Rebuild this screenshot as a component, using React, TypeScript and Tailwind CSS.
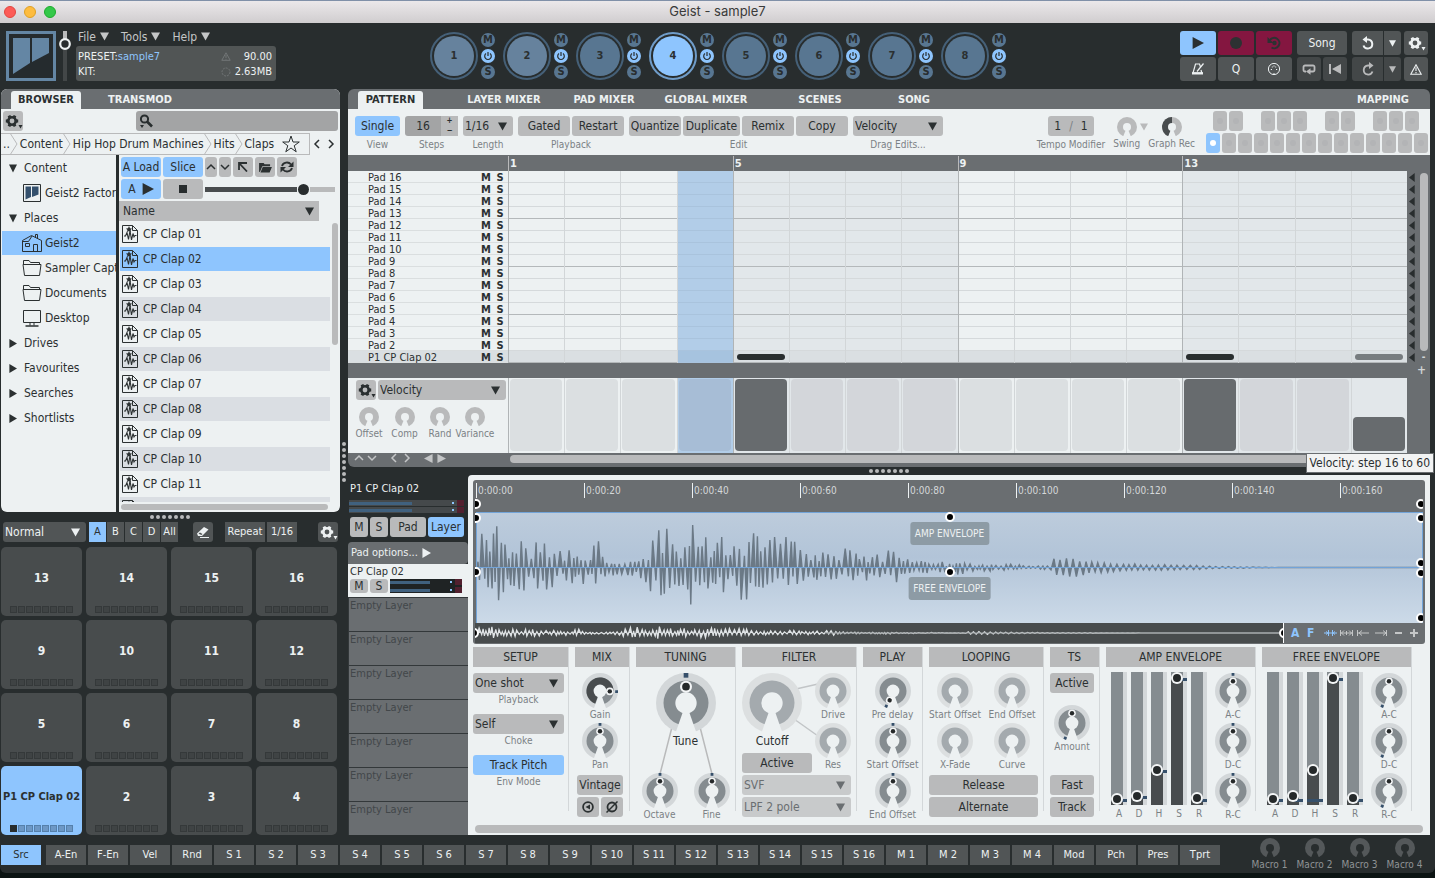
import React from 'react';
import clsx from 'clsx';

const KITS = [1, 2, 3, 4, 5, 6, 7, 8];
const STEPS = Array.from({ length: 16 }, (_, i) => i);
const PADS = [13, 14, 15, 16, 9, 10, 11, 12, 5, 6, 7, 8, 1, 2, 3, 4];
const CLAPS = ['01', '02', '03', '04', '05', '06', '07', '08', '09', '10', '11', '12'];
const SOURCES = [
  'A-En', 'F-En', 'Vel', 'Rnd',
  ...STEPS.map((i) => `S ${i + 1}`),
  'M 1', 'M 2', 'M 3', 'M 4', 'Mod', 'Pch', 'Pres', 'Tprt',
];

/* ---------- icons ---------- */

const Tri = ({ dir = 'down', className = 'w-[9px] h-[9px]' }: { dir?: 'down' | 'right' | 'left'; className?: string }) => {
  const d = { down: 'M0 0.5H10L5 9.5Z', right: 'M0.5 0L10 5L0.5 10Z', left: 'M9.5 0L0 5L9.5 10Z' }[dir];
  return (
    <svg viewBox="0 0 10 10" className={clsx('shrink-0', className)} fill="currentColor" preserveAspectRatio="none">
      <path d={d} />
    </svg>
  );
};

const Gear = () => (
  <svg viewBox="0 0 20 20" className="w-5 h-5 shrink-0" fill="none" stroke="currentColor">
    <circle cx="9" cy="10" r="3.7" strokeWidth="2.6" />
    {[0, 60, 120, 180, 240, 300].map((a) => (
      <path key={a} d="M7.2 6.2L7.6 3.8H10.4L10.8 6.2Z" fill="currentColor" stroke="none" transform={`rotate(${a + 30} 9 10)`} />
    ))}
    <path d="M15.5 14H19.5L17.5 17.5Z" fill="currentColor" stroke="none" />
  </svg>
);

const Caret = ({ d }: { d: string }) => (
  <svg viewBox="0 0 10 10" className="w-[10px] h-[10px] shrink-0" fill="none" stroke="currentColor" strokeWidth="1.5">
    <path d={d} />
  </svg>
);
const UP = 'M1 7L5 3L9 7';
const DOWN = 'M1 3L5 7L9 3';
const LEFT = 'M7 1L3 5L7 9';
const RIGHT = 'M3 1L7 5L3 9';

const FileIcon = () => (
  <svg viewBox="0 0 16 18" className="w-4 h-[18px] shrink-0" fill="none" stroke="currentColor" strokeWidth="1">
    <path d="M0.5 0.5H10.5L15.5 5.5V17.5H0.5Z" />
    <path d="M10.5 0.5V5.5H15.5" />
    <path d="M2 11H3.5L5 7.5L6.5 14.5L8 5.5L9.5 15L11 8.5L12 12L13 10.5H14.5" strokeWidth="1.1" />
    <path d="M7 1L8 3.2L10 3.4L8.6 5L9 7L7 6L5 7L5.4 5L4 3.4L6 3.2Z" fill="currentColor" stroke="none" />
  </svg>
);

const TreeIcon = ({ kind }: { kind: string }) => (
  <svg viewBox="0 0 20 18" className="w-5 h-[18px] shrink-0" fill="none" stroke="currentColor" strokeWidth="1">
    {kind === 'factory' && (
      <>
        <path d="M1.5 0.5H18.5V17.5H1.5Z" fill="#edf1f2" />
        <path d="M3.5 2.5H9V13L3.5 15.5ZM10 2.5H16.5V10.5L10 13Z" fill="#34506d" stroke="none" />
      </>
    )}
    {kind === 'home' && (
      <>
        <path d="M0.5 17.5V6.5L9.5 1.5L19.5 6.5M0.5 7.5H6.5L10 2M13.5 3.5V0.5H15.5V4.5M19.5 6.5V17.5H0.5" />
        <path d="M3.5 9.5H7.5V12.5H3.5ZM11.5 17V10.5H15.5V17" />
      </>
    )}
    {kind === 'folder' && (
      <>
        <path d="M1.5 5V1.5H7L8.5 3.5H17.5V5M1 5.5H19L17.5 16.5H2.5Z" />
      </>
    )}
    {kind === 'desktop' && (
      <>
        <path d="M1.5 1.5H18.5V13.5H1.5ZM8 13.5V16.5M12 13.5V16.5" />
        <path d="M3.5 17H16.5" strokeWidth="1.6" />
      </>
    )}
  </svg>
);

const Power = () => (
  <svg viewBox="0 0 14 14" className="w-[14px] h-[14px]" fill="none" stroke="#282d2e" strokeWidth="1.2">
    <path d="M5 4.6A3.3 3.3 0 1 0 9 4.6M7 3V7" />
  </svg>
);

const Dots = ({ vertical = false }: { vertical?: boolean }) => (
  <div className={clsx('flex gap-0.5', vertical && 'flex-col')}>
    {[0, 1, 2, 3, 4, 5, 6].map((i) => (
      <span key={i} className="w-1 h-1 rounded-full bg-[#b9babb]" />
    ))}
  </div>
);

/* ---------- controls ---------- */

interface KnobProps {
  label: string;
  size?: 20 | 36 | 60;
  tone?: 'mini' | 'dark' | 'normal' | 'dim';
  angle?: number; // pointer, degrees clockwise from noon
  mark?: number; // modulation mark
  fill?: boolean;
}

const TONES = {
  mini: ['none', '#b9babb', '#edf1f2'],
  dark: ['none', '#54585a', '#282d2e'],
  normal: ['#d3d7d9', '#858c90', '#edf1f2'],
  dim: ['#dcdfe0', '#a4aaae', '#edf1f2'],
};

const Knob: React.FC<KnobProps> = ({ label, size = 36, tone = 'normal', angle, mark, fill }) => {
  const [outer, ring, bg] = TONES[tone];
  const small = size === 20;
  const r = small ? 20 : 13.5;
  return (
    <label className="relative flex flex-col items-center whitespace-nowrap">
      <input type="range" className="sr-only" aria-label={label} />
      <svg
        viewBox={small ? '-20 -20 40 40' : '-18 -18 36 36'}
        className={clsx('shrink-0', size === 20 && 'w-5 h-5', size === 36 && 'w-9 h-9', size === 60 && 'w-[60px] h-[60px]')}
      >
        <circle r="18" fill={outer} />
        <circle r={r} fill={ring} />
        {fill && !small && <path d="M0 0L-4.9 12.6A13.5 13.5 0 1 1 13.5 0Z" fill="#484c4e" />}
        {fill && small && <path d="M0 0L-7 18.7A20 20 0 0 1 0 -20Z" fill="#484c4e" />}
        <path d={small ? 'M0 0L-9 22H9Z' : 'M0 0L-7 20H7Z'} fill={bg} />
        <circle r={small ? 8 : 6.4} fill={bg} />
        {mark !== undefined && <rect x="-1.4" y="-18" width="2.8" height="2.8" fill="#36506b" transform={`rotate(${mark})`} />}
        {angle !== undefined && (
          <g transform={`rotate(${angle})`}>
            <circle cy="-9.8" r={size === 60 ? 3.6 : 3.8} fill="#f4f6f7" />
            <circle cy="-9.8" r={size === 60 ? 2.3 : 2.2} fill="#25292a" />
          </g>
        )}
      </svg>
      {size === 60 ? (
        <span className="text-xs leading-4 text-[#2b3031]">{label}</span>
      ) : (
        <span
          className={clsx(
            'text-[10px]',
            small ? 'leading-[14px]' : 'leading-3 mb-0.5',
            tone === 'dark' ? 'text-[#8f9395]' : 'text-[#7b8185]'
          )}
        >
          {label}
        </span>
      )}
    </label>
  );
};

const Btn = ({ children, className, label }: { children: React.ReactNode; className?: string; label?: string }) => (
  <button
    aria-label={label}
    className={clsx('h-5 shrink-0 rounded-[3px] flex items-center justify-center text-xs leading-4 whitespace-nowrap', className)}
  >
    {children}
  </button>
);

const GREY = 'bg-[#b9babb] text-[#2b3031]';
const BLUE = 'bg-[#8ec5fe] text-[#2b3031]';
const SLATE = 'bg-[#515556] text-[#edf1f2]';

const Drop = ({ value, label, className }: { value: string; label: string; className?: string }) => (
  <div className={clsx('relative h-5 shrink-0 rounded-[3px] flex items-center', className)}>
    <select aria-label={label} className="appearance-none w-full h-5 bg-transparent pl-0.5 text-xs leading-4 outline-none">
      <option>{value}</option>
    </select>
    <Tri className="w-[9px] h-[9px] absolute right-[6px] pointer-events-none" />
  </div>
);

const Caption = ({ children }: { children: React.ReactNode }) => (
  <span className="text-[10px] leading-[14px] text-[#7b8185] text-center whitespace-nowrap">{children}</span>
);

/* ---------- title + header ---------- */

const TitleBar = () => (
  <div className="relative h-[23px] bg-linear-to-b from-[#ebe8ea] to-[#d0cdcf] border-t border-[#8090a8] flex items-center justify-center">
    <div className="absolute left-1 flex gap-2">
      <span className="w-3 h-3 rounded-full bg-[#fc5b57] border border-[#e2463f]" />
      <span className="w-3 h-3 rounded-full bg-[#fdbc40] border border-[#dfa023]" />
      <span className="w-3 h-3 rounded-full bg-[#34c84a] border border-[#1dab2c]" />
    </div>
    <span className="font-['Inter',sans-serif] text-[13px] text-[#3a3a3a]">Geist - sample7</span>
  </div>
);

const Transport = () => {
  const b = 'h-6 rounded-[3px] flex items-center justify-center';
  return (
    <div className="flex gap-[5px] text-[#edf1f2] text-xs">
      <div className="grid grid-cols-[36px_36px_36px] gap-0.5">
        <button aria-label="Play" className={clsx(b, 'bg-[#8ec5fe] text-[#2b3031]')}><Tri dir="right" className="w-3 h-3" /></button>
        <button aria-label="Record" className={clsx(b, 'bg-[#841640]')}><span className="w-3 h-3 rounded-full bg-[#2d3132]" /></button>
        <button aria-label="Loop record" className={clsx(b, 'bg-[#841640]')}>
          <svg viewBox="0 0 16 14" className="w-4 h-[14px]" fill="none" stroke="#2d3132" strokeWidth="2">
            <path d="M4 4A5.2 5.2 0 1 1 5.5 11.5" />
            <circle cx="8.5" cy="7" r="2.2" fill="#2d3132" stroke="none" />
            <path d="M1.500 1V7H7.500Z" fill="#2d3132" stroke="none" />
          </svg>
        </button>
        <button aria-label="Metronome" className={clsx(b, 'bg-[#515556]')}>
          <svg viewBox="0 0 14 12" className="w-[14px] h-3" fill="none" stroke="currentColor">
            <path d="M2 10L4.5 1H8.5L9.5 4M10 7L10.8 10M6 8.5L12.5 0.5" strokeWidth="1.2" />
            <path d="M1 10.3H12" strokeWidth="2.4" />
          </svg>
        </button>
        <button className={clsx(b, 'bg-[#515556]')}>Q</button>
        <button aria-label="MIDI" className={clsx(b, 'bg-[#515556]')}>
          <svg viewBox="0 0 14 14" className="w-[14px] h-[14px]" fill="none" stroke="currentColor">
            <circle cx="7" cy="7" r="5.6" />
            <path d="M3.8 7.5H5M9 7.5H10.2M4.8 5H5.8M8.2 5H9.2M6.4 4H7.6M6 12H8" />
          </svg>
        </button>
      </div>
      <div className="grid grid-cols-[24px_24px] gap-0.5">
        <button className={clsx(b, 'bg-[#515556] col-span-2')}>Song</button>
        <button aria-label="Loop" className={clsx(b, 'bg-[#434748] text-[#b9babb]')}>
          <svg viewBox="0 0 14 12" className="w-[14px] h-3" fill="none" stroke="currentColor" strokeWidth="1.8">
            <path d="M4 8.5H3A1.5 1.5 0 0 1 1.5 7V4A1.5 1.5 0 0 1 3 2.5H11A1.5 1.5 0 0 1 12.5 4V7A1.5 1.5 0 0 1 11 8.5H8" />
            <path d="M8.5 5.2V11.8L4 8.5Z" fill="currentColor" stroke="none" />
          </svg>
        </button>
        <button aria-label="Rewind" className={clsx(b, 'bg-[#434748] text-[#b9babb]')}>
          <svg viewBox="0 0 12 10" className="w-3 h-[10px]" fill="currentColor"><path d="M0 0H2V10H0ZM12 0V10L3 5Z" /></svg>
        </button>
      </div>
      <div className="grid grid-cols-[31px_17px] gap-x-px gap-y-0.5">
        <button aria-label="Undo" className={clsx(b, 'bg-[#515556] rounded-r-none')}>
          <svg viewBox="0 0 14 14" className="w-[14px] h-[14px]" fill="none" stroke="currentColor" strokeWidth="2">
            <path d="M4.5 3.5H7A4.5 4.5 0 1 1 2.5 9.5" />
            <path d="M6 0V7L1.5 3.5Z" fill="currentColor" stroke="none" />
          </svg>
        </button>
        <button aria-label="Undo history" className={clsx(b, 'bg-[#515556] rounded-l-none')}><Tri className="w-[7px] h-[7px]" /></button>
        <button aria-label="Redo" className={clsx(b, 'bg-[#434748] text-[#b9babb] rounded-r-none')}>
          <svg viewBox="0 0 14 14" className="w-[14px] h-[14px]" fill="none" stroke="currentColor" strokeWidth="1.8">
            <path d="M9.5 3.5H7A4.5 4.5 0 1 0 11.5 9.5" />
            <path d="M8 0V7L12.5 3.5Z" fill="currentColor" stroke="none" />
          </svg>
        </button>
        <button aria-label="Redo history" className={clsx(b, 'bg-[#434748] text-[#b9babb] rounded-l-none')}><Tri className="w-[7px] h-[7px]" /></button>
      </div>
      <div className="grid grid-cols-[24px] gap-0.5 -ml-[2px]">
        <button aria-label="Settings" className={clsx(b, 'bg-[#515556]')}><Gear /></button>
        <button aria-label="Warnings" className={clsx(b, 'bg-[#515556]')}>
          <svg viewBox="0 0 12 11" className="w-3 h-[11px]" fill="none" stroke="currentColor"><path d="M6 0.8L11.2 10.3H0.8ZM6 3.5V7M6 8V9.3" strokeWidth="1.1" /></svg>
        </button>
      </div>
    </div>
  );
};

const Header = () => (
  <header className="h-[66px] flex items-start justify-between pl-1.5 pr-[7px] pt-2">
    <div className="flex w-[340px]">
      <svg viewBox="0 0 50 50" className="w-[50px] h-[50px] shrink-0">
        <rect x="1.5" y="1.5" width="47" height="47" fill="#252b2e" stroke="#6486a4" strokeWidth="3" />
        <path d="M7 7H24V32L7 43Z" fill="#6486a4" />
        <path d="M26 7H43V22L26 31Z" fill="#6486a4" />
      </svg>
      <label className="relative ml-[3px]">
        <input type="range" className="sr-only" aria-label="Master volume" />
        <svg viewBox="0 0 12 50" className="w-3 h-[50px]">
          <path d="M4 0H8V8H4Z" fill="#b9babb" />
          <path d="M4 18H8V50H4Z" fill="#434748" />
          <circle cx="6" cy="13" r="4.8" fill="#282d2e" stroke="#edf1f2" strokeWidth="2.2" />
        </svg>
      </label>
      <div className="ml-[5px]">
        <div className="flex gap-3 h-[15px] pl-0.5 text-xs leading-3 text-[#c4c6c7]">
          {['File', 'Tools', 'Help'].map((m) => (
            <button key={m} className="flex items-start gap-1">{m}<Tri className="w-[9px] h-[9px] mt-px" /></button>
          ))}
        </div>
        <div className="w-[200px] h-[35px] rounded-[3px] bg-[#515555] px-0.5 pt-[3px] pr-1 text-[11px] leading-[15px] text-[#edf1f2] flex justify-between">
          <div>
            <div>PRESET:<span className="text-[#8ec5fe]">sample7</span></div>
            <div>KIT:</div>
          </div>
          <div className="text-right">
            <div className="flex items-center justify-between gap-1">
              <svg viewBox="0 0 10 9" className="w-[10px] h-[9px]" fill="none" stroke="#727677"><path d="M5 0.8L9.2 8.3H0.8ZM5 3V6M5 6.8V7.6" /></svg>
              90.00
            </div>
            <div className="flex items-center gap-1">
              <svg viewBox="0 0 10 10" className="w-[10px] h-[10px]" fill="none" stroke="#727677"><circle cx="5" cy="5" r="4" strokeDasharray="2 1" /></svg>
              2.63MB
            </div>
          </div>
        </div>
      </div>
    </div>
    <div className="flex gap-2.5">
      {KITS.map((k) => (
        <div key={k} className="flex items-center gap-[3px] w-[63px] pt-px">
          <button
            className={clsx(
              'w-12 h-12 shrink-0 rounded-full border-2 p-0.5',
              k === 4 ? 'border-[#6f9cc9]' : 'border-[#456078]'
            )}
          >
            <span
              className={clsx(
                'w-full h-full rounded-full flex items-center justify-center text-[11px] font-bold text-[#2b3031]',
                k === 4 ? 'bg-[#8ec5fe]' : k < 3 ? 'bg-[#66829d]' : 'bg-[#587691]'
              )}
            >
              {k}
            </span>
          </button>
          <div className="flex flex-col gap-0.5 text-[11px] leading-[14px] font-bold text-[#282d2e]">
            <button className="w-[14px] h-[14px] rounded-full bg-[#587691]">M</button>
            <button aria-label="Power" className="w-[14px] h-[14px] rounded-full bg-[#8ec5fe]"><Power /></button>
            <button className="w-[14px] h-[14px] rounded-full bg-[#587691]">S</button>
          </div>
        </div>
      ))}
    </div>
    <div className="w-[340px] flex justify-end"><Transport /></div>
  </header>
);

/* ---------- browser ---------- */

const TREE = [
  { name: 'Content', open: true },
  { name: 'Geist2 Factory', icon: 'factory' },
  { name: 'Places', open: true },
  { name: 'Geist2', icon: 'home', active: true },
  { name: 'Sampler Captures', icon: 'folder' },
  { name: 'Documents', icon: 'folder' },
  { name: 'Desktop', icon: 'desktop' },
  { name: 'Drives' },
  { name: 'Favourites' },
  { name: 'Searches' },
  { name: 'Shortlists' },
];

const Chevron = () => (
  <svg viewBox="0 0 8 22" className="w-2 h-[22px] shrink-0 mr-0.5" fill="none" stroke="#b9babb"><path d="M0 0L7 11L0 22" /></svg>
);

const Browser = () => (
  <section className="ml-px h-[423px] bg-[#edf1f2] rounded-md overflow-hidden flex flex-col text-xs text-[#2b3031]">
    <div className="h-5 shrink-0 bg-[#6a6e71] pt-0.5 pl-2.5 flex text-[11px] font-bold text-[#edf1f2]">
      <button className="w-[70px] bg-[#edf1f2] text-[#2b3031] rounded-t-[3px]">BROWSER</button>
      <button className="w-[118px]">TRANSMOD</button>
    </div>
    <div className="flex justify-between pl-0.5 pr-0.5 pt-0.5">
      <Btn label="Browser options" className={clsx('w-5', GREY)}><Gear /></Btn>
      <div className="w-[202px] h-5 rounded-[3px] bg-[#a3a4a5] flex items-center pl-[3px]">
        <svg viewBox="0 0 14 16" className="w-[14px] h-4 shrink-0" fill="none" stroke="#282d2e">
          <circle cx="5.5" cy="6" r="3.6" strokeWidth="2" /><path d="M8 8.5L13 13.5" strokeWidth="2.6" /><path d="M1 12H5L3 15Z" fill="#282d2e" stroke="none" />
        </svg>
        <input type="text" aria-label="Search" className="flex-1 bg-transparent outline-none" />
      </div>
    </div>
    <div className="flex items-center mt-0.5 h-[22px] shrink-0">
      <div className="w-[309px] h-[22px] border border-l-0 border-[#b9babb] flex items-center pl-0.5 whitespace-nowrap">
        <span>..</span><Chevron />
        <a href="#content">Content</a><Chevron />
        <a href="#machines">Hip Hop Drum Machines</a><Chevron />
        <a href="#hits">Hits</a><Chevron />
        <a href="#claps">Claps</a>
        <svg viewBox="0 0 18 18" className="w-[18px] h-[18px] shrink-0 ml-2" fill="none" stroke="#2b3031"><path d="M9 1L11 7H17.3L12.2 10.7L14.2 16.8L9 13L3.8 16.8L5.8 10.7L0.7 7H7Z" /></svg>
      </div>
      <button aria-label="Back" className="ml-0.5"><Caret d={LEFT} /></button>
      <button aria-label="Forward" className="ml-1"><Caret d={RIGHT} /></button>
    </div>
    <div className="flex flex-1 min-h-0">
      <ul className="w-[115px] shrink-0 overflow-hidden pt-px">
        {TREE.map((t) => (
          <li key={t.name} className="h-[25px]">
            <button className={clsx('h-6 w-full flex items-center whitespace-nowrap ml-px', t.active && 'bg-[#8ec5fe]', t.icon ? 'pl-5 gap-[3px]' : 'pl-[7px] gap-[7px]')}>
              {t.icon ? <TreeIcon kind={t.icon} /> : <Tri dir={t.open ? 'down' : 'right'} className="w-2 h-[9px]" />}
              {t.name}
            </button>
          </li>
        ))}
      </ul>
      <div className="w-[3px] shrink-0 bg-[#282d2e]" />
      <div className="flex-1 min-w-0 flex flex-col">
        <div className="flex gap-0.5 pl-0.5 pt-0.5">
          <Btn className={clsx('w-10', BLUE)}>A Load</Btn>
          <Btn className={clsx('w-10', BLUE)}>Slice</Btn>
          <Btn label="Previous" className={clsx('w-3', GREY)}><Caret d={UP} /></Btn>
          <Btn label="Next" className={clsx('w-3', GREY)}><Caret d={DOWN} /></Btn>
          <Btn label="Parent" className={clsx('w-5', GREY)}>
            <svg viewBox="0 0 10 10" className="w-[10px] h-[10px]" fill="none" stroke="currentColor" strokeWidth="1.8"><path d="M1 8V1H9M1 1L9 9.5" /></svg>
          </Btn>
          <Btn label="Open folder" className={clsx('w-5', GREY)}>
            <svg viewBox="0 0 14 12" className="w-[13px] h-[11px]" fill="currentColor"><path d="M0 11V1H5L6 2.5H12V4.5H3.5L1 10.5ZM4 5.5H14L11.5 11.5H1.5Z" /></svg>
          </Btn>
          <Btn label="Refresh" className={clsx('w-5', GREY)}>
            <svg viewBox="0 0 14 12" className="w-[14px] h-3" fill="none" stroke="currentColor" strokeWidth="1.8">
              <path d="M2 5A5 4.5 0 0 1 11 3.5M12 7A5 4.5 0 0 1 3 8.5" />
              <path d="M13.5 0.5V6H8ZM0.5 11.5V6H6Z" fill="currentColor" stroke="none" />
            </svg>
          </Btn>
        </div>
        <div className="flex gap-0.5 pl-0.5 pt-0.5 items-center">
          <Btn className={clsx('w-10 gap-1.5', BLUE)}>A <Tri dir="right" className="w-3 h-3" /></Btn>
          <Btn label="Stop" className={clsx('w-10', GREY)}><span className="w-2 h-2 bg-[#282d2e]" /></Btn>
          <label className="relative flex items-center w-[130px]">
            <input type="range" className="sr-only" aria-label="Preview level" />
            <span className="w-[92px] h-[5px] bg-[#484c4e]" />
            <span className="w-[11px] h-[11px] mx-px rounded-full bg-[#282d2e]" />
            <span className="flex-1 h-[5px] bg-[#b9babb]" />
          </label>
        </div>
        <button className="w-[200px] h-5 mt-0.5 shrink-0 flex items-center justify-between pl-1 pr-[5px] bg-[#b9babb]">
          Name<Tri className="w-[9px] h-[9px]" />
        </button>
        <div className="flex justify-between mt-px h-[280px]">
          <ul className="w-[211px] pl-px h-[280px] overflow-hidden">
            {CLAPS.map((c, i) => (
              <li key={c} className="h-[25px]">
                <button className={clsx('h-6 w-full flex items-center gap-[5px] pl-0.5', c === '02' ? 'bg-[#8ec5fe]' : i % 2 && 'bg-[#dadee3]')}>
                  <FileIcon />
                  CP Clap {c}
                </button>
              </li>
            ))}
          </ul>
          <div className="w-1.5 h-[122px] mt-px mr-0.5 rounded-full bg-[#b9babb]" />
        </div>
        <div className="w-[207px] h-1.5 mt-0.5 ml-0.5 rounded-full bg-[#b9babb]" />
      </div>
    </div>
  </section>
);

const PadArea = () => (
  <>
    <div className="h-[10px] flex items-center justify-center"><Dots /></div>
    <div className="flex items-center pl-[3px]">
      <Drop value="Normal" label="Pad mode" className="w-[83px] bg-[#515556] text-[#edf1f2]" />
      <div className="flex gap-px ml-[3px]">
        {['A', 'B', 'C', 'D', 'All'].map((b, i) => (
          <button key={b} className={clsx('w-[17px] h-5 text-[11px] text-center', i === 0 ? BLUE : SLATE)}>{b}</button>
        ))}
      </div>
      <Btn label="Erase" className={clsx('w-5 ml-[15px]', SLATE)}>
        <svg viewBox="0 0 14 14" className="w-[14px] h-[14px]" fill="none" stroke="currentColor">
          <path d="M1 8.5L8 2L12.5 4.5L6 11L2 11Z" fill="currentColor" stroke="none" />
          <path d="M2.5 8.7L4 7.5L6.5 9L5.5 10Z" fill="#515556" stroke="none" /><path d="M4 12.5H13" />
        </svg>
      </Btn>
      <Btn className={clsx('w-10 ml-3 rounded-none', SLATE)}><span className="text-[11px]">Repeat</span></Btn>
      <Btn className={clsx('w-[30px] ml-0.5 rounded-none', SLATE)}><span className="text-[11px]">1/16</span></Btn>
      <Btn label="Pad settings" className={clsx('w-5 ml-[21px]', SLATE)}><Gear /></Btn>
    </div>
    <div className="grid grid-cols-4 gap-1 mt-[5px] pl-px w-[337px]">
      {PADS.map((p) => {
        const on = p === 1;
        return (
          <button
            key={p}
            className={clsx('h-[69px] rounded-[5px] flex flex-col items-center pt-6 text-xs leading-[14px] font-bold whitespace-nowrap', on ? 'bg-[#8ec5fe] text-[#2b3031]' : 'bg-[#484c4d] text-[#edf1f2]')}
          >
            <span className={clsx(on && 'text-[11px]')}>{on ? 'P1 CP Clap 02' : p}</span>
            <span className="flex gap-px mt-[21px]">
              {KITS.map((k) => (
                <span key={k} className={clsx('w-[7px] h-[7px] border', on ? (k === 1 ? 'bg-[#282d2e] border-[#282d2e]' : 'bg-[#6d98c6] border-[#5580ab]') : 'bg-[#3f4344] border-[#35393a]')} />
              ))}
            </span>
          </button>
        );
      })}
    </div>
  </>
);

/* ---------- pattern ---------- */

const isShaded = (s: number) => Math.floor(s / 4) % 2 === 1;

const Group = ({ caption, children }: { caption: string; children: React.ReactNode }) => (
  <div className="flex flex-col items-center gap-0.5">
    <div className="flex gap-0.5">{children}</div>
    <Caption>{caption}</Caption>
  </div>
);

const Keys = () => (
  <div className="flex flex-col gap-0.5 w-[222px]">
    <div className="flex gap-0.5 pl-[7px]">
      {STEPS.slice(0, 13).map((i) => (
        <span key={i} className={clsx('w-[14px] h-5 rounded-[3px] flex items-center justify-center shrink-0', [2, 6, 9].includes(i) ? '' : 'bg-[#b9babb]')}>
          {![2, 6, 9].includes(i) && <span className="w-1.5 h-1.5 rounded-full bg-[#b3b4b6]" />}
        </span>
      ))}
    </div>
    <div className="flex gap-0.5">
      {STEPS.slice(0, 14).map((i) => (
        <button key={i} aria-label={`Pattern ${i + 1}`} className={clsx('w-[14px] h-5 rounded-[3px] flex items-center justify-center', i ? 'bg-[#b9babb]' : 'bg-[#8ec5fe]')}>
          <span className={clsx('w-1.5 h-1.5 rounded-full', i ? 'bg-[#b3b4b6]' : 'bg-white')} />
        </button>
      ))}
    </div>
  </div>
);

const Pattern = () => (
  <section className="bg-[#6a6e71] rounded-md text-[#2b3031] text-xs">
    <div className="h-5 pt-0.5 pl-2.5 pr-[21px] flex text-[11px] font-bold text-[#edf1f2]">
      <button className="w-[65px] bg-[#edf1f2] text-[#2b3031] rounded-t-[3px]">PATTERN</button>
      <button className="w-[100px] ml-[31px]">LAYER MIXER</button>
      <button className="w-[100px]">PAD MIXER</button>
      <button className="w-[104px]">GLOBAL MIXER</button>
      <button className="w-[124px]">SCENES</button>
      <button className="w-16">SONG</button>
      <button className="ml-auto">MAPPING</button>
    </div>

    <div className="h-[46px] bg-[#edf1f2] flex items-start gap-[5px] pl-[7px] pr-0.5 pt-[7px]">
      <Group caption="View"><Btn className={clsx('w-[45px]', BLUE)}>Single</Btn></Group>
      <Group caption="Steps">
        <div className="flex">
          <input aria-label="Steps" defaultValue="16" className="w-9 h-5 rounded-l-[3px] bg-[#a3a4a5] text-center outline-none" />
          <div className="w-[17px] h-5 bg-[#b9babb] flex flex-col text-[8px] leading-[10px] font-bold">
            <button>+</button>
            <button>−</button>
          </div>
        </div>
      </Group>
      <Group caption="Length"><Drop value="1/16" label="Length" className={clsx('w-[50px]', GREY)} /></Group>
      <Group caption="Playback">
        <Btn className={clsx('w-[52px]', GREY)}>Gated</Btn>
        <Btn className={clsx('w-[52px]', GREY)}>Restart</Btn>
      </Group>
      <Group caption="Edit">
        <Btn className={clsx('w-[52px]', GREY)}>Quantize</Btn>
        <Btn className={clsx('w-[57px]', GREY)}>Duplicate</Btn>
        <Btn className={clsx('w-[52px]', GREY)}>Remix</Btn>
        <Btn className={clsx('w-[52px]', GREY)}>Copy</Btn>
      </Group>
      <Group caption="Drag Edits..."><Drop value="Velocity" label="Drag edits" className={clsx('w-[90px]', GREY)} /></Group>
      <div className="ml-auto flex gap-2">
        <Group caption="Tempo Modifier">
          <Btn className={clsx('w-[46px] gap-2', GREY)}><span>1</span><span className="text-[#7b8185]">/</span><span>1</span></Btn>
        </Group>
        <div className="relative flex pt-px">
          <Knob label="Swing" size={20} tone="mini" />
          <Tri className="w-2 h-2 absolute top-[7px] left-[27px] text-[#b9babb]" />
        </div>
        <div className="pt-px"><Knob label="Graph Rec" size={20} tone="mini" fill /></div>
      </div>
      <div className="ml-1.5 -mt-[5px]"><Keys /></div>
    </div>

    <div className="h-4 pl-40 pr-[23px] flex text-[11px] leading-[15px] font-bold text-[#edf1f2]">
      {[1, 5, 9, 13].map((n) => (
        <div key={n} className="flex-1 mt-px pl-px border-l border-[#b9babb]">{n}</div>
      ))}
    </div>

    <div className="flex">
      <div className="w-40 bg-[#edf1f2] text-[11px] leading-3">
        {STEPS.map((i) => {
          const pad = 16 - i;
          return (
            <div key={pad} className={clsx('h-3 flex items-start pt-px pl-5 pr-1 shadow-[inset_0_-1px_0_#dadedf]', pad === 1 && 'bg-[#dadfe2]')}>
              <span className="flex-1">{pad === 1 ? 'P1 CP Clap 02' : `Pad ${pad}`}</span>
              <button className="w-[15px] font-bold text-left">M</button>
              <button className="w-2 font-bold">S</button>
            </div>
          );
        })}
      </div>
      <div className="flex-1 flex">
        {STEPS.map((s) => (
          <div
            key={s}
            className={clsx(
              'flex-1 border-l',
              s % 4 ? 'border-[#d2d6d8]' : 'border-[#b0b4b6]',
              s === 3 ? 'bg-[#b2cde8]' : isShaded(s) ? 'bg-[#e2e7ea]' : 'bg-[#edf1f2]'
            )}
          >
            {STEPS.map((r) => (
              <div
                key={r}
                className={clsx(
                  'h-3 border-b pt-[3px] pl-[3px] pr-1',
                  s === 3 ? 'border-[#a9c3dd]' : r % 4 === 3 ? 'border-[#b4b8ba]' : 'border-[#d5d9db]',
                  r === 15 && (s === 3 ? 'bg-[#a6c3df]' : 'bg-[#dadfe2]')
                )}
              >
                {r === 15 && (s === 4 || s === 12) && <div className="h-1.5 rounded-sm bg-[#282d2e]" />}
                {r === 15 && s === 15 && <div className="h-1.5 rounded-sm bg-[#777c7f]" />}
              </div>
            ))}
          </div>
        ))}
      </div>
      <div className="w-[23px] flex">
        <div className="w-2 ml-0.5 text-[#282d2e]">
          {STEPS.map((i) => <div key={i} className="h-3 flex items-center"><Tri dir="left" className="w-1.5 h-[9px]" /></div>)}
        </div>
        <div className="flex-1 flex flex-col items-center text-[#d0d3d4] text-[10px] font-bold leading-3">
          <div className="w-2 h-[178px] mt-0.5 rounded-full bg-[#b9babb]" />
          <button aria-label="Zoom out">-</button>
        </div>
      </div>
    </div>

    <div className="h-[15px] pr-1 flex justify-end text-xs leading-[15px] font-bold text-[#d0d3d4]"><button aria-label="Zoom in">+</button></div>

    <div className="flex h-[75px] pr-[23px]">
      <div className="w-40 bg-[#edf1f2] pl-2 pt-0.5">
        <div className="flex gap-0.5">
          <Btn label="Lane options" className={clsx('w-5', GREY)}><Gear /></Btn>
          <Drop value="Velocity" label="Lane" className={clsx('w-32', GREY)} />
        </div>
        <div className="grid grid-cols-[28px_43px_28px_42px] mt-[7px] -ml-px">
          {['Offset', 'Comp', 'Rand', 'Variance'].map((k) => <Knob key={k} label={k} size={20} tone="mini" />)}
        </div>
      </div>
      <div className="flex-1 flex">
        {STEPS.map((s) => {
          const full = s === 4 || s === 12;
          return (
            <div
              key={s}
              className={clsx(
                'flex-1 border-l pl-px pr-0.5 pb-0.5 flex items-end',
                s % 4 ? 'border-[#d2d6d8]' : 'border-[#b0b4b6]',
                s === 3 ? 'bg-[#b2cde8]' : isShaded(s) ? 'bg-[#e2e7ea]' : 'bg-[#edf1f2]'
              )}
            >
              <div
                className={clsx('w-full rounded-sm', full || s === 15 ? 'bg-[#676b6e]' : s === 3 ? 'bg-[#a7bdd6]' : isShaded(s) ? 'bg-[#d3d6da]' : 'bg-[#dbdfe1]')}
                style={{ height: s === 15 ? 34 : 72 }}
              />
            </div>
          );
        })}
      </div>
    </div>

    <div className="relative h-[14px] flex pr-[25px] text-[#c4c6c7]">
      <div className="w-[162px] flex items-center pl-1.5 pb-1">
        <Caret d={UP} /><span className="w-[3px]" /><Caret d={DOWN} /><span className="w-3" />
        <Caret d={LEFT} /><span className="w-[3px]" /><Caret d={RIGHT} /><span className="w-3" />
        <Tri dir="left" className="w-[9px] h-[9px]" /><span className="w-1" /><Tri dir="right" className="w-[9px] h-[9px]" />
      </div>
      <div className="flex-1 h-2 mt-0.5 rounded-full bg-[#b9babb]" />
      <div className="absolute z-10 top-0 -right-1 h-5 px-[3px] border border-[#6a6e71] bg-[#f2f3f3] text-[#2b3031] leading-[18px] whitespace-nowrap">
        Velocity: step 16 to 60
      </div>
    </div>
  </section>
);

/* ---------- layers ---------- */

const Meter = ({ className, track }: { className?: string; track: string }) => (
  <div className={clsx('flex flex-col', className)}>
    {[0, 1].map((i) => (
      <div key={i} className={clsx('h-1.5 flex items-center', track)}>
        <span className="w-[55%] h-[3px] bg-[#40617f]" />
        <span className="w-0.5 h-0.5 ml-auto mr-[3px] bg-[#8ec5fe]" />
        <span className="w-[7px] h-1.5 bg-[#52202f]" />
      </div>
    ))}
  </div>
);

const Layers = () => (
  <div className="w-[120px] shrink-0 text-xs text-[#2b3031]">
    <div className="h-[25px] pl-0.5 leading-[28px] text-[#edf1f2] text-[11px]">P1 CP Clap 02</div>
    <Meter className="ml-px w-[115px] gap-px" track="bg-[#45494b]" />
    <div className="flex gap-0.5 pl-0.5 mt-1">
      <Btn className={clsx('w-[18px]', GREY)}>M</Btn>
      <Btn className={clsx('w-[18px]', GREY)}>S</Btn>
      <Btn className={clsx('w-9', GREY)}>Pad</Btn>
      <Btn className={clsx('w-9', BLUE)}>Layer</Btn>
    </div>
    <button className="mt-[5px] h-[22px] w-full rounded-t-[4px] rounded-br-[4px] bg-[#6a6e71] text-[#edf1f2] text-[11px] flex items-center gap-1 pl-[3px]">
      Pad options... <Tri dir="right" className="w-[9px] h-[10px]" />
    </button>
    <div className="h-[33px] bg-[#edf1f2] pl-0.5 text-[11px] leading-[15px]">
      CP Clap 02
      <div className="flex gap-0.5">
        <Btn className={clsx('w-[18px] h-[14px]', GREY)}>M</Btn>
        <Btn className={clsx('w-[18px] h-[14px]', GREY)}>S</Btn>
        <Meter className="w-[72px] h-[14px] bg-[#1f2324] justify-between" track="bg-[#1f2324]" />
      </div>
    </div>
    {[0, 1, 2, 3, 4, 5, 6].map((i) => (
      <div key={i} className="h-[34px] border-t border-l border-[#33383a] bg-[#6a6e71] pl-px text-[11px] leading-[15px] text-[#42474a]">Empty Layer</div>
    ))}
  </div>
);

/* ---------- wave editor ---------- */

const TOP = [
  [0, 12], [8, 46], [14, 24], [20, 44], [26, 27], [34, 18], [39, 38], [46, 31], [53, 20], [60, 41], [70, 35], [77, 14], [91, 21], [105, 13], [114, 20], [123, 29],
  [131, 10], [147, 7], [159, 15], [171, 15], [182, 42], [189, 40], [197, 31], [207, 22], [214, 40], [222, 43], [227, 32], [237, 20], [246, 32],
  [257, 28], [268, 20], [276, 37], [282, 42], [289, 40], [301, 31], [308, 34], [317, 27], [326, 18], [337, 20], [349, 15], [361, 14], [372, 27],
  [379, 20], [389, 10], [401, 13], [410, 17], [420, 14], [426, 11], [436, 6], [461, 8], [471, 3], [484, 6], [497, 3], [537, 4], [554, 2],
  [574, 2], [578, 10], [584, 10], [604, 8], [619, 5], [644, 4], [657, 4], [674, 3], [697, 3], [724, 2], [750, 1], [804, 0], [946, 0],
];
const BOTTOM = [
  [0, 12], [10, 28], [22, 45], [30, 27], [40, 38], [52, 22], [63, 40], [80, 17], [100, 16], [120, 18], [135, 9], [150, 8], [165, 12], [175, 27],
  [184, 47], [192, 44], [207, 25], [214, 43], [222, 38], [240, 25], [252, 28], [258, 14], [265, 38], [279, 47], [291, 44], [297, 40], [304, 18],
  [312, 26], [322, 14], [340, 20], [355, 15], [372, 22], [377, 28], [385, 13], [400, 12], [412, 20], [425, 11], [440, 6], [460, 5], [484, 7],
  [497, 4], [537, 3], [554, 2], [574, 2], [580, 10], [600, 10], [619, 6], [644, 4], [674, 3], [697, 3], [724, 2], [750, 1], [804, 0], [946, 0],
];

const level = (env: number[][], x: number) => {
  const i = Math.max(1, env.findIndex((p) => p[0] >= x));
  const [x0, y0] = env[i - 1];
  const [x1, y1] = env[i];
  return y0 + ((x - x0) / (x1 - x0)) * (y1 - y0);
};

const wavePath = (mid: number, scale: number, stretch: number) => {
  let seed = 4211;
  const rand = () => {
    seed = (seed * 16807) % 2147483647;
    return seed / 2147483647;
  };
  for (let i = 0; i < 5; i++) rand();
  let d = `M0 ${mid}`;
  let up = true;
  for (let x = 1; x < 860; x += x < 570 ? 1.3 + rand() * 1.9 : 2.6 + rand()) {
    const k = x < 570 ? 0.35 + Math.pow(rand(), 1.4) * 0.7 : 0.7 + rand() * 0.3;
    const y = up ? mid - level(TOP, x) * k * scale : mid + level(BOTTOM, x) * k * scale;
    d += `L${(x * stretch).toFixed(1)} ${y.toFixed(1)}`;
    up = !up;
  }
  return `${d}L${946 * stretch} ${mid}`;
};
const MAIN_WAVE = wavePath(54.5, 1, 1);
const MINI_WAVE = wavePath(10, 0.15, 0.854);

const Handle = ({ className }: { className: string }) => (
  <span className={clsx('absolute w-[10px] h-[10px] rounded-full bg-black border-2 border-white', className)} />
);

const Wave = () => (
  <div className="bg-[#6a6e71] rounded-[3px] h-[164px] px-0.5">
    <div className="overflow-hidden">
      <div className="h-8 pl-px pt-[3px] flex text-[10px] leading-[15px] text-[#d5d8d9]">
        {['00', '20', '40', '60', '80', '100', '120', '140', '160'].map((t, i) => (
          <div key={t} className={clsx('shrink-0', i === 8 ? 'flex-1' : 'w-[108px]')}>
            <div className="h-[15px] border-l border-[#edf1f2] pl-px">0:00:{t}</div>
          </div>
        ))}
      </div>
      <div className="relative h-[111px] ml-px border-t border-l border-r border-[#72a4d8] bg-linear-to-b from-[#bdccdc] via-[#b2c4d8] via-40% to-[#ccdae8]">
        <svg viewBox="0 0 946 110" preserveAspectRatio="none" className="w-full h-[110px]">
          <path d={MAIN_WAVE} fill="#6b7986" stroke="#6b7986" strokeWidth="1.4" />
          <path d="M0 54.5H946" stroke="#72a4d8" />
        </svg>
        <Handle className="-left-1.5 -top-3.5 w-3 h-3" />
        <Handle className="-left-1.5 top-0" />
        <Handle className="-left-1.5 top-[54px]" />
        <Handle className="-right-1 -top-3.5 w-3 h-3" />
        <Handle className="-right-1 top-0" />
        <Handle className="-right-1 top-[45px]" />
        <Handle className="-right-1 top-[55px]" />
        <Handle className="-right-1 top-[100px]" />
        <Handle className="left-1/2 -ml-[5px] -top-px" />
        <Handle className="left-1/2 -ml-[5px] top-[54px]" />
        <span className="absolute left-1/2 -translate-x-1/2 top-[9px] h-[23px] leading-[23px] px-[5px] rounded-[3px] bg-[#8d9ba5] text-[10px] text-[#edf1f2] whitespace-nowrap">AMP ENVELOPE</span>
        <span className="absolute left-1/2 -translate-x-1/2 top-[64px] h-[23px] leading-[23px] px-[5px] rounded-[3px] bg-[#8d9ba5] text-[10px] text-[#edf1f2] whitespace-nowrap">FREE ENVELOPE</span>
      </div>
      <div className="h-5 flex">
        <div className="relative flex-1 overflow-hidden bg-[#484c4d] border-r border-white">
          <svg viewBox="0 0 808 20" preserveAspectRatio="none" className="w-full h-5">
            <path d={MINI_WAVE} fill="#dfe3e5" stroke="#dfe3e5" strokeWidth="1.2" />
            <path d="M350 10H808" stroke="#8d9294" strokeWidth="1" />
          </svg>
          <Handle className="-left-1.5 top-[5px]" />
          <Handle className="-right-1.5 top-[5px]" />
        </div>
        <div className="w-[139px] flex items-center pl-[7px] text-[#c4c6c7]">
          <button className="w-4 text-left text-xs font-bold text-[#8ec5fe]">A</button>
          <button className="w-4 text-left text-xs font-bold text-[#8ec5fe]">F</button>
          <svg viewBox="0 0 96 12" className="w-24 h-3" fill="none" stroke="currentColor">
            <path d="M1 6H4M11 6H14M5.5 3V9M9.5 3V9M3 4.500L5 6L3 7.500M12 4.500L10 6L12 7.500M6 6H9" stroke="#8ec5fe" />
            <path d="M17.5 3V9M29.5 3V9M18 6H29M21 3.5L18.5 6L21 8.5M26 3.5L28.5 6L26 8.5M23.5 4V8" />
            <path d="M34.5 3V9M35 6H46M39 3.5L36 6L39 8.5M52 6H63M60 3.5L63 6L60 8.5M63.5 3V9" />
            <path d="M72 6H79M87 6H95M91 2V10" strokeWidth="2" />
          </svg>
        </div>
      </div>
    </div>
  </div>
);

/* ---------- parameter sections ---------- */

const Section = ({ title, className, children }: { title: string; className: string; children: React.ReactNode }) => (
  <section className={clsx('shrink-0 border-r border-[#d3d7d9]', className)}>
    <h3 className="h-5 mb-1.5 bg-[#b9babb] text-center text-xs leading-5 whitespace-nowrap">{title}</h3>
    <div className="h-[138px]">{children}</div>
  </section>
);

// [name, thumb position, mark position, fully marked]
type Stage = [string, number, number, boolean?];

const Envelope = ({ title, stages, mark }: { title: string; stages: Stage[]; mark: number }) => (
  <Section title={title} className="w-[150px]">
    <div className="flex justify-between pl-[5px] pr-1">
      <div className="flex gap-1 -mt-px">
        {stages.map(([name, pos, tick, wide]) => (
          <label key={name} className="relative flex flex-col items-center text-[10px] leading-[18px] text-[#7b8185]">
            <input type="range" className="sr-only" aria-label={`${title} ${name}`} />
            <svg viewBox="0 0 16 133" className="w-4 h-[133px]" overflow="visible">
              <path d="M12 0H16V133H12Z" fill="#d3d7d9" />
              <path d="M0 0H12V133H0Z" fill="#858c90" />
              <rect y={pos} width="12" height={133 - pos} fill="#484c4e" />
              <rect x={wide ? 0 : 8} y={tick} width={wide ? 16 : 8} height="3" fill="#36506b" />
              <circle cx="6" cy={pos} r="6" fill="#f4f6f7" />
              <circle cx="6" cy={pos} r="4" fill="#25292a" />
            </svg>
            {name}
          </label>
        ))}
      </div>
      <div>
        {['A-C', 'D-C', 'R-C'].map((k) => <Knob key={k} label={k} angle={0} mark={mark} />)}
      </div>
    </div>
  </Section>
);

const Params = () => (
  <div className="flex gap-1.5 mt-[3px] pb-3 text-xs overflow-hidden">
    <Section title="SETUP" className="w-24">
      <div className="w-[91px] flex flex-col">
        <Drop value="One shot" label="Playback" className={GREY} />
        <Caption>Playback</Caption>
        <Drop value="Self" label="Choke" className={clsx('mt-[7px]', GREY)} />
        <Caption>Choke</Caption>
        <Btn className={clsx('mt-[7px]', BLUE)}>Track Pitch</Btn>
        <Caption>Env Mode</Caption>
      </div>
    </Section>
    <Section title="MIX" className="w-[55px]">
      <div className="pr-1 flex flex-col items-center">
        <Knob label="Gain" angle={92} mark={92} fill />
        <Knob label="Pan" angle={0} mark={0} />
        <div className="grid grid-cols-2 gap-0.5 w-[46px] mt-0.5">
          <Btn className={clsx('col-span-2', GREY)}>Vintage</Btn>
          <Btn label="Reverse" className={GREY}>
            <svg viewBox="0 0 12 12" className="w-3 h-3" fill="none" stroke="currentColor" strokeWidth="1.8"><circle cx="6" cy="6" r="4.9" /><path d="M8 3.5V8.5L3.5 6Z" fill="currentColor" stroke="none" /></svg>
          </Btn>
          <Btn label="Invert phase" className={GREY}>
            <svg viewBox="0 0 12 12" className="w-3 h-3" fill="none" stroke="currentColor" strokeWidth="1.8"><circle cx="6" cy="6" r="4.5" /><path d="M0.5 11.5L11.5 0.5" strokeWidth="1.5" /></svg>
          </Btn>
        </div>
      </div>
    </Section>
    <Section title="TUNING" className="w-[100px]">
      <div className="relative flex flex-col items-center">
        <svg viewBox="0 0 99 144" className="absolute top-0 left-0 w-[99px] h-36" fill="none" stroke="#b9babb" strokeWidth="1.5"><path d="M36 54L24 101M64 54L76 101" /></svg>
        <Knob label="Tune" size={60} angle={0} mark={0} />
        <div className="grid grid-cols-[52px_52px] mt-6">
          <Knob label="Octave" angle={0} mark={0} />
          <Knob label="Fine" angle={0} mark={0} />
        </div>
      </div>
    </Section>
    <Section title="FILTER" className="w-[115px]">
      <div className="relative flex justify-between w-[109px] h-[102px]">
        <svg viewBox="0 0 109 100" className="absolute inset-0 w-[109px] h-[100px]" fill="none" stroke="#c2c5c7" strokeWidth="1.5"><path d="M54 16L76 11M52 46L76 63" /></svg>
        <div className="w-[70px] flex flex-col items-start">
          <Knob label="Cutoff" size={60} tone="dim" />
          <Btn className={clsx('w-[70px] mt-1', GREY)}>Active</Btn>
        </div>
        <div>
          <Knob label="Drive" tone="dim" />
          <Knob label="Res" tone="dim" />
        </div>
      </div>
      <Drop value="SVF" label="Filter model" className="w-[109px] bg-[#c8cacb] text-[#6a6e71]" />
      <Drop value="LPF 2 pole" label="Filter type" className="w-[109px] mt-0.5 bg-[#c8cacb] text-[#6a6e71]" />
    </Section>
    <Section title="PLAY" className="w-[60px]">
      <Knob label="Pre delay" angle={200} mark={204} />
      <Knob label="Start Offset" angle={0} mark={0} />
      <Knob label="End Offset" angle={0} mark={0} />
    </Section>
    <Section title="LOOPING" className="w-[115px]">
      <div className="grid grid-cols-[52px_52px] gap-x-[5px] w-[109px] h-[102px] content-start">
        <Knob label="Start Offset" tone="dim" />
        <Knob label="End Offset" tone="dim" />
        <Knob label="X-Fade" tone="dim" />
        <Knob label="Curve" tone="dim" />
      </div>
      <Btn className={clsx('w-[109px]', GREY)}>Release</Btn>
      <Btn className={clsx('w-[109px] mt-0.5', GREY)}>Alternate</Btn>
    </Section>
    <Section title="TS" className="w-[50px]">
      <div className="w-11">
        <Btn className={clsx('w-11 mb-3', GREY)}>Active</Btn>
        <Knob label="Amount" angle={0} mark={204} />
        <Btn className={clsx('w-11 mt-5', GREY)}>Fast</Btn>
        <Btn className={clsx('w-11 mt-0.5', GREY)}>Track</Btn>
      </div>
    </Section>
    <Envelope title="AMP ENVELOPE" mark={0} stages={[['A', 127, 127], ['D', 124, 124], ['H', 98, 98], ['S', 6, 6], ['R', 126, 127]]} />
    <Envelope title="FREE ENVELOPE" mark={204} stages={[['A', 127, 127], ['D', 124, 127], ['H', 98, 127, true], ['S', 6, 6], ['R', 126, 127]]} />
  </div>
);

export default function App() {
  return (
    <div className="min-h-screen flex flex-col bg-[#0c1413] font-['DejaVu_Sans_Condensed','Noto_Sans',sans-serif]">
      <TitleBar />
      <div className="bg-[#282d2e] rounded-b-md">
        <Header />
        <main className="flex pr-[5px]">
          <div className="w-[340px] shrink-0">
            <Browser />
            <PadArea />
          </div>
          <div className="w-2 shrink-0 flex justify-center pt-[353px]"><Dots vertical /></div>
          <div className="flex-1 min-w-0">
            <Pattern />
            <div className="h-2 flex items-center justify-center"><Dots /></div>
            <div className="flex">
              <Layers />
              <div className="flex-1 min-w-0 bg-[#edf1f2] rounded-tl-[4px] px-[5px] pt-[5px] text-[#2b3031]">
                <Wave />
                <Params />
                <div className="h-2 mt-0.5 mx-0.5 mb-0.5 rounded-full bg-[#b9babb]" />
              </div>
            </div>
          </div>
        </main>
        <footer className="h-[38px] flex pl-px pr-2 text-[11px]">
          <div className="flex gap-0.5 pt-[10px]">
            <button className={clsx('w-10 h-5 mr-[3px]', BLUE)}>Src</button>
            {SOURCES.map((s) => (
              <button key={s} className={clsx('w-10 h-5', SLATE)}>{s}</button>
            ))}
          </div>
          <div className="ml-auto pt-[3px] grid grid-cols-[45px_45px_45px_45px]">
            {[1, 2, 3, 4].map((m) => <Knob key={m} label={`Macro ${m}`} size={20} tone="dark" />)}
          </div>
        </footer>
      </div>
    </div>
  );
}
